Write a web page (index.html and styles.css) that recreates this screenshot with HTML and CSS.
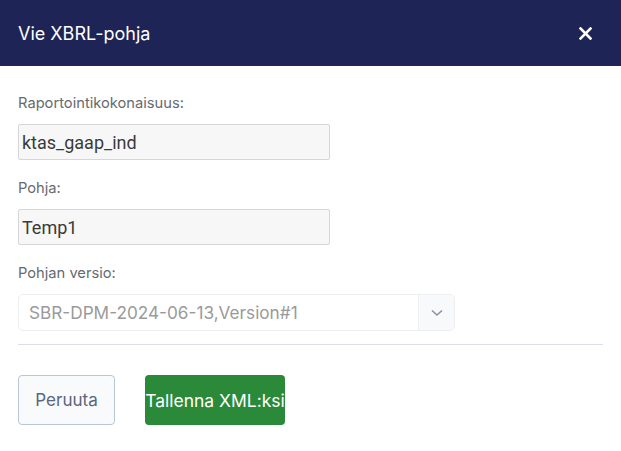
FILE: index.html
```html
<!DOCTYPE html>
<html lang="fi">
<head>
<meta charset="utf-8">
<title>Vie XBRL-pohja</title>
<link rel="stylesheet" href="styles.css">
</head>
<body>
<div class="modal">
  <header class="modal-header">
    <h1 class="modal-title">Vie XBRL-pohja</h1>
    <button class="close-btn" aria-label="Sulje">
      <svg width="13" height="13" viewBox="0 0 13 13"><path d="M1.5 1.5 L11.5 11.5 M11.5 1.5 L1.5 11.5" stroke="#fff" stroke-width="2.6" stroke-linecap="square"/></svg>
    </button>
  </header>
  <div class="modal-body">
    <div class="field">
      <label class="field-label">Raportointikokonaisuus:</label>
      <div class="text-input">ktas_gaap_ind</div>
    </div>
    <div class="field">
      <label class="field-label">Pohja:</label>
      <div class="text-input">Temp1</div>
    </div>
    <div class="field">
      <label class="field-label">Pohjan versio:</label>
      <div class="select">
        <span class="select-value">SBR-DPM-2024-06-13,Version#1</span>
        <span class="select-arrow">
          <svg width="12" height="8" viewBox="0 0 12 8"><path d="M1 1.5 L6 6 L11 1.5" fill="none" stroke="#8a8fa3" stroke-width="1.6"/></svg>
        </span>
      </div>
    </div>
    <hr class="divider">
    <div class="actions">
      <button class="btn btn-cancel">Peruuta</button>
      <button class="btn btn-save">Tallenna XML:ksi</button>
    </div>
  </div>
</div>
</body>
</html>
```
FILE: styles.css
```css
html, body {
  margin: 0;
  padding: 0;
  background: #ffffff;
}
body {
  font-family: Inter, "Noto Sans", sans-serif;
  width: 621px;
  height: 451px;
  overflow: hidden;
}
.modal {
  display: flex;
  flex-direction: column;
}
.modal-header {
  height: 66px;
  background: #1f2456;
  display: flex;
  align-items: center;
  justify-content: space-between;
  padding: 0 29px 0 18px;
}
.modal-title {
  margin: 0;
  font-size: 18px;
  font-weight: 400;
  color: #ffffff;
  letter-spacing: 0;
}
.close-btn {
  background: none;
  border: 0;
  padding: 0;
  width: 13px;
  height: 13px;
  display: flex;
}
.modal-body {
  padding: 28px 18px 0 18px;
  display: flex;
  flex-direction: column;
}
.field {
  display: flex;
  flex-direction: column;
  margin-bottom: 19px;
}
.field-label {
  font-family: Inter, "Noto Sans", sans-serif;
  font-size: 14.7px;
  color: #666a70;
  line-height: 18px;
  margin-bottom: 12px;
}
.text-input {
  box-sizing: border-box;
  width: 312px;
  height: 36px;
  background: #f7f7f7;
  border: 1px solid #d6d6d6;
  border-radius: 2px;
  padding: 0 3px;
  display: flex;
  align-items: center;
  font-family: Roboto, "Liberation Sans", sans-serif;
  font-size: 18px;
  color: #3a3a3a;
}
.select {
  box-sizing: border-box;
  width: 437px;
  height: 37px;
  border: 1px solid #eceef2;
  border-radius: 5px;
  display: flex;
  align-items: stretch;
  overflow: hidden;
}
.select-value {
  flex: 1;
  display: flex;
  align-items: center;
  padding-left: 10px;
  font-size: 17.2px;
  color: #9a9a9a;
  border-right: 1px solid #eceef2;
}
.select-arrow {
  width: 35px;
  background: #f8f9fa;
  display: flex;
  align-items: center;
  justify-content: center;
}
.divider {
  margin: 0;
  margin-top: -6px;
  border: 0;
  border-top: 1px solid #dcdfe7;
}
.actions {
  display: flex;
  gap: 30px;
  padding-top: 30px;
}
.btn {
  box-sizing: border-box;
  height: 50px;
  font-family: Inter, "Noto Sans", sans-serif;
  font-size: 17.5px;
  border-radius: 4px;
  padding: 0;
}
.btn-cancel {
  width: 97px;
  background: #f8fafc;
  border: 1px solid #b8c6d8;
  color: #5a6680;
  font-size: 17px;
}
.btn-save {
  width: 140px;
  background: #2a8a3a;
  border: 0;
  color: #ffffff;
  white-space: nowrap;
}
```
